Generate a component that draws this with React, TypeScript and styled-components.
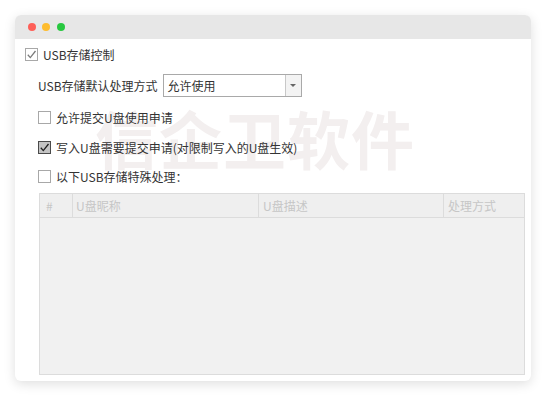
import React from 'react';
import styled, { createGlobalStyle } from 'styled-components';

const GlobalStyle = createGlobalStyle`
  html, body {
    margin: 0;
    padding: 0;
    background: #ffffff;
  }
  body {
    font-family: "Noto Sans CJK SC", "Noto Sans", sans-serif;
    font-size: 12px;
    color: #333333;
  }
`;

const Page = styled.div`
  padding: 15px;
  width: 546px;
  height: 396px;
  box-sizing: border-box;
`;

const Window = styled.div`
  width: 516px;
  height: 366px;
  border-radius: 6px;
  background: #ffffff;
  box-shadow: 0 3px 12px rgba(0, 0, 0, 0.13);
  overflow: hidden;
  display: flex;
  flex-direction: column;
`;

const TitleBar = styled.div`
  height: 24px;
  flex-shrink: 0;
  background: #e7e7e7;
  display: flex;
  align-items: center;
  gap: 6.5px;
  padding-left: 12.5px;
`;

const Dot = styled.span<{ color: string }>`
  width: 8px;
  height: 8px;
  border-radius: 50%;
  background: ${({ color }) => color};
`;

const Body = styled.div`
  position: relative;
  flex: 1;
  padding: 6px 6px 0 10px;
  display: flex;
  flex-direction: column;
`;

const Watermark = styled.div`
  position: absolute;
  left: 80px;
  top: 66px;
  font-size: 63px;
  font-weight: 700;
  line-height: 1;
  letter-spacing: 1px;
  color: #f3efef;
  pointer-events: none;
  white-space: nowrap;
  z-index: 0;
`;

const Row = styled.div<{ indent?: number; gap?: number; top: number; h?: number }>`
  position: relative;
  z-index: 1;
  display: flex;
  align-items: center;
  height: ${({ h }) => h ?? 18}px;
  margin-top: ${({ top }) => top}px;
  padding-left: ${({ indent }) => indent ?? 0}px;
  gap: ${({ gap }) => gap ?? 5}px;
  white-space: nowrap;
`;

type BoxKind = 'light' | 'off' | 'dark';

const Box = styled.span<{ kind: BoxKind }>`
  width: 11px;
  height: 11px;
  flex-shrink: 0;
  display: flex;
  align-items: center;
  justify-content: center;
  border: 1px solid ${({ kind }) => (kind === 'dark' ? '#4a4a4a' : '#a8a8a8')};
  background: ${({ kind }) => (kind === 'dark' ? '#c4c4c4' : '#ffffff')};
`;

const Label = styled.span`
  font-size: 12px;
  color: #333333;
`;

const Select = styled.div`
  width: 137px;
  height: 21px;
  border: 1px solid #a9a9a9;
  display: flex;
  background: #ffffff;
  margin-left: 0px;
`;

const SelectValue = styled.div`
  flex: 1;
  padding-left: 4px;
  display: flex;
  align-items: center;
  font-size: 12px;
  color: #333333;
`;

const SelectArrow = styled.div`
  width: 15px;
  border-left: 1px solid #c8c8c8;
  background: #f3f3f3;
  display: flex;
  align-items: center;
  justify-content: center;

  &::after {
    content: '';
    border-left: 3px solid transparent;
    border-right: 3px solid transparent;
    border-top: 3px solid #666666;
  }
`;

const Table = styled.div`
  position: relative;
  z-index: 1;
  margin-top: 8px;
  margin-left: 14px;
  width: 486px;
  height: 182px;
  box-sizing: border-box;
  border: 1px solid #dcdcdc;
  background: #f1f1f1;
  display: flex;
  flex-direction: column;
`;

const HeaderRow = styled.div`
  display: grid;
  grid-template-columns: 33px 186px 185px 1fr;
  height: 23px;
  border-bottom: 1px solid #dcdcdc;
  background: #efefef;
`;

const HeaderCell = styled.div<{ pad: number; last?: boolean }>`
  display: flex;
  align-items: center;
  padding-left: ${({ pad }) => pad}px;
  border-right: ${({ last }) => (last ? 'none' : '1px solid #dcdcdc')};
  font-size: 12px;
  color: #c6c6c6;
`;

const Check: React.FC<{ kind: BoxKind }> = ({ kind }) => (
  <Box kind={kind}>
    {kind !== 'off' && (
      <svg width="11" height="11" viewBox="0 0 11 11">
        <polyline
          points="1.8,5.8 4.3,8.6 9.5,2"
          fill="none"
          stroke={kind === 'dark' ? '#1e1e1e' : '#7a7a7a'}
          strokeWidth="1.3"
        />
      </svg>
    )}
  </Box>
);

const columns = [
  { title: '#', pad: 6 },
  { title: 'U盘昵称', pad: 3 },
  { title: 'U盘描述', pad: 4 },
  { title: '处理方式', pad: 4 },
];

const App: React.FC = () => {
  return (
    <>
      <GlobalStyle />
      <Page>
        <Window>
          <TitleBar>
            <Dot color="#fe5f58" />
            <Dot color="#febc2e" />
            <Dot color="#28c840" />
          </TitleBar>
          <Body>
            <Watermark>信企卫软件</Watermark>
            <Row top={0}>
              <Check kind="light" />
              <Label>USB存储控制</Label>
            </Row>
            <Row top={11} indent={13} h={23} gap={5}>
              <Label>USB存储默认处理方式</Label>
              <Select>
                <SelectValue>允许使用</SelectValue>
                <SelectArrow />
              </Select>
            </Row>
            <Row top={11} indent={13}>
              <Check kind="off" />
              <Label>允许提交U盘使用申请</Label>
            </Row>
            <Row top={12} indent={13}>
              <Check kind="dark" />
              <Label>写入U盘需要提交申请(对限制写入的U盘生效)</Label>
            </Row>
            <Row top={11} indent={13}>
              <Check kind="off" />
              <Label>以下USB存储特殊处理：</Label>
            </Row>
            <Table>
              <HeaderRow>
                {columns.map((c, i) => (
                  <HeaderCell key={c.title} pad={c.pad} last={i === columns.length - 1}>
                    {c.title}
                  </HeaderCell>
                ))}
              </HeaderRow>
            </Table>
          </Body>
        </Window>
      </Page>
    </>
  );
};

export default App;
